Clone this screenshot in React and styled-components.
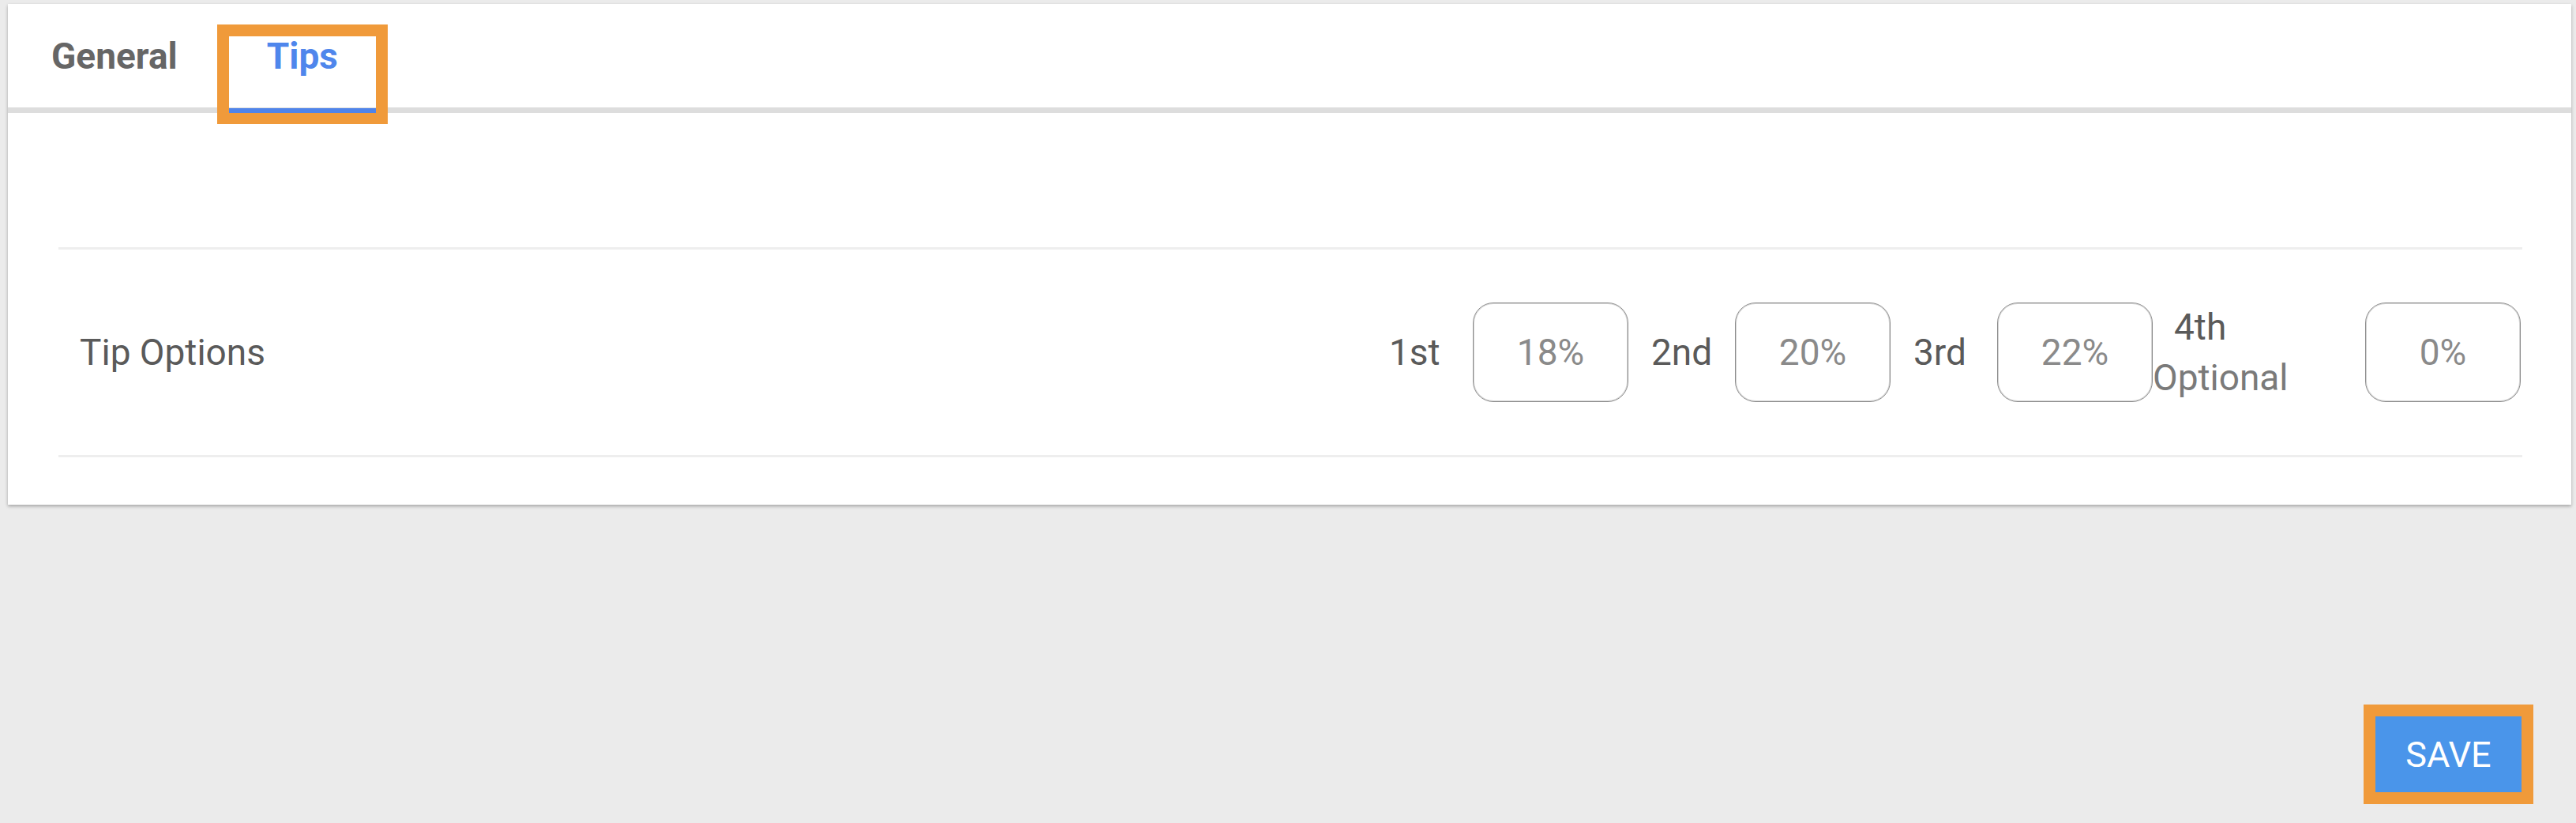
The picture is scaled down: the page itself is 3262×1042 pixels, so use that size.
import React from 'react'
import styled, { createGlobalStyle } from 'styled-components'

const GlobalStyle = createGlobalStyle`
    html, body {
        margin: 0;
        padding: 0;
        background: #ebebeb;
        font-family: Roboto, "Liberation Sans", sans-serif;
    }
`

const Page = styled.div`
    min-height: 100vh;
    box-sizing: border-box;
    display: flex;
    flex-direction: column;
    padding: 5px 6px 0 10px;
`

const Card = styled.div`
    background: #fff;
    box-shadow: 0 2px 4px rgba(0, 0, 0, 0.3);
`

const TabBar = styled.div`
    display: flex;
    gap: 17px;
    height: 131px;
    padding-left: 7px;
    border-bottom: 7px solid #ddd;
`

const Tab = styled.div`
    position: relative;
    display: flex;
    align-items: center;
    padding: 0 48px;
    font-size: 46px;
    font-weight: 700;
    color: ${props => (props.active ? '#4f86ec' : '#666')};
    cursor: pointer;

    &::after {
        content: '';
        display: ${props => (props.active ? 'block' : 'none')};
        position: absolute;
        left: 0;
        right: 0;
        bottom: -7px;
        height: 6px;
        background: #4f84ea;
    }
`

const HighlightFrame = styled.span`
    position: absolute;
    top: 41px;
    bottom: -6px;
    left: 0;
    right: 0;
    outline: 15px solid #f09a3a;
    pointer-events: none;
`

const Panel = styled.div`
    padding: 170px 62px 60px 64px;
`

const Row = styled.div`
    display: flex;
    align-items: center;
    justify-content: space-between;
    min-height: 260px;
    padding: 0 2px 0 27px;
    border-top: 3px solid #eee;
    border-bottom: 3px solid #eee;
`

const RowLabel = styled.div`
    font-size: 46px;
    color: #5a5a5a;
`

const Options = styled.div`
    display: flex;
    align-items: center;
`

const OptionLabel = styled.div`
    width: 135px;
    box-sizing: border-box;
    padding-left: 29px;
    font-size: 46px;
    color: #5a5a5a;
`

const OptionStack = styled.div`
    width: 269px;
    display: flex;
    flex-direction: column;
    font-size: 46px;
    line-height: 64px;
`

const StackLine = styled.span`
    padding-left: ${props => props.indent || 0}px;
    color: ${props => (props.muted ? '#7a7a7a' : '#5a5a5a')};
`

const TipInput = styled.input`
    width: 197px;
    height: 126px;
    box-sizing: border-box;
    border: 1px solid #8c8c8c;
    box-shadow: inset 0 0 0 1px #d4d4d4;
    border-radius: 26px;
    background: #fff;
    text-align: center;
    font-family: Roboto, "Liberation Sans", sans-serif;
    font-size: 46px;
    color: #8a8a8a;
    outline: none;
`

const Footer = styled.div`
    margin-top: auto;
    display: flex;
    justify-content: flex-end;
    padding: 0 63px 39px 0;
`

const SaveButton = styled.button`
    width: 185px;
    height: 96px;
    border: none;
    background: #4a95ea;
    color: #fff;
    font-family: Roboto, "Liberation Sans", sans-serif;
    font-size: 45px;
    text-transform: uppercase;
    box-shadow: 0 4px 14px rgba(0, 0, 0, 0.2);
    outline: 15px solid #f09a3a;
    cursor: pointer;
`

const tips = [
    { label: '1st', value: '18%' },
    { label: '2nd', value: '20%' },
    { label: '3rd', value: '22%' },
]

export default function App() {
    return (
        <>
            <GlobalStyle />
            <Page>
                <Card>
                    <TabBar>
                        <Tab>General</Tab>
                        <Tab active>
                            Tips
                            <HighlightFrame />
                        </Tab>
                    </TabBar>
                    <Panel>
                        <Row>
                            <RowLabel>Tip Options</RowLabel>
                            <Options>
                                {tips.map(tip => (
                                    <React.Fragment key={tip.label}>
                                        <OptionLabel>{tip.label}</OptionLabel>
                                        <TipInput readOnly value={tip.value} />
                                    </React.Fragment>
                                ))}
                                <OptionStack>
                                    <StackLine indent={27}>4th</StackLine>
                                    <StackLine muted>Optional</StackLine>
                                </OptionStack>
                                <TipInput readOnly value="0%" />
                            </Options>
                        </Row>
                    </Panel>
                </Card>
                <Footer>
                    <SaveButton>Save</SaveButton>
                </Footer>
            </Page>
        </>
    )
}
